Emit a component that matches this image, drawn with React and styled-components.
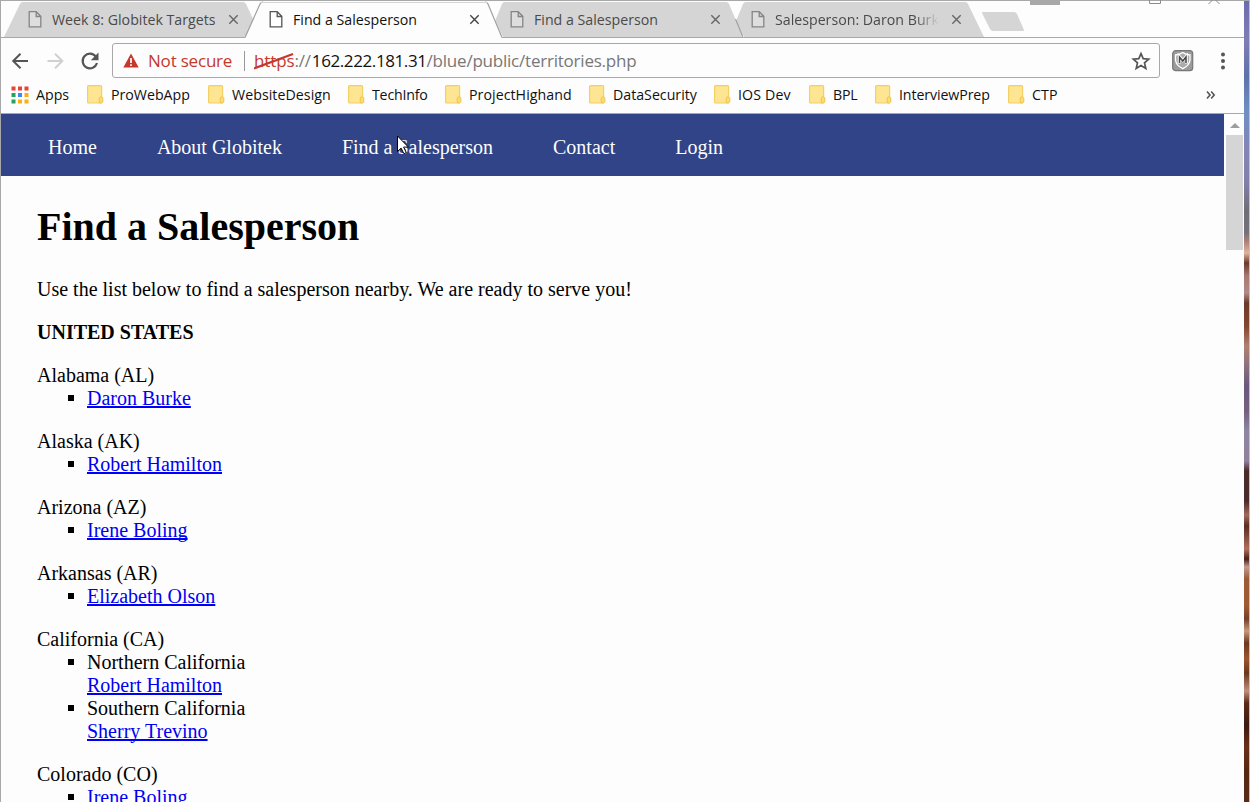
import React from 'react';
import styled, { createGlobalStyle } from 'styled-components';

const GlobalStyle = createGlobalStyle`
  * { box-sizing: border-box; }
  body { margin: 0; background: #fdfdfd; overflow: hidden; }
`;

const Desktop = styled.div`
  display: flex;
  width: 1250px;
  height: 802px;
  overflow: hidden;
`;
const Window = styled.div`
  display: flex;
  flex-direction: column;
  position: relative;
  width: 1244px;
  height: 802px;
  border-left: 1px solid #a8a8a8;
  border-top: 1px solid #a8a8a8;
  background: #fdfdfd;
  font-family: 'Open Sans', 'Noto Sans', sans-serif;
`;
const Wallpaper = styled.div`
  width: 6px;
  height: 802px;
  border-right: 1px solid #c4bfc4;
  border-top: 1px solid #a8a8a8;
  background: linear-gradient(
    #6b6cae 0, #7f7db4 40px, #5d72a8 75px, #6f8fc4 110px, #8584b4 150px,
    #8280aa 180px, #6f6e76 210px, #77707a 232px, #a98078 240px, #e0b49c 252px,
    #6a3a2c 262px, #a87a72 275px, #b08a88 292px, #6b3a2a 302px, #84452e 325px,
    #b08070 345px, #94757a 360px, #6a5a80 385px, #75607c 410px, #8c86a4 430px,
    #92809c 460px, #4a2a28 470px, #4c2a2c 500px, #a06a5c 514px, #5a2c22 525px,
    #b0705a 548px, #4a2018 558px, #c49a90 566px, #9a5c38 578px, #a05a30 605px,
    #74402a 618px, #c89a7c 630px, #6b3820 642px, #9c5630 658px, #6a371c 672px,
    #c09080 690px, #5a2a16 702px, #3c1a12 725px, #6a3018 745px, #54280f 770px, #5a2c18 802px
  );
`;
const CaptionButtons = styled.svg`
  position: absolute;
  left: 1029px;
  top: -1px;
`;

const TabStrip = styled.div`
  display: flex;
  height: 37px;
  padding-left: 3px;
  border-bottom: 1px solid #a8a8a8;
`;
const TabBox = styled.div`
  display: flex;
  align-items: center;
  position: relative;
  width: 257px;
  height: 37px;
  margin-right: -16px;
  padding: 0 15px 0 24px;
  z-index: ${p => p.$layer};
`;
const TabShape = styled.svg`
  position: absolute;
  left: 0;
  top: 0;
  z-index: -1;
`;
const TabTitle = styled.span`
  width: 163px;
  margin-left: 9px;
  overflow: hidden;
  white-space: nowrap;
  font-size: 14.2px;
  line-height: 22px;
  color: ${p => (p.$active ? '#111' : '#4a4a4a')};
  ${p => p.$fade && 'mask-image: linear-gradient(to right, #000 140px, transparent 164px);'}
`;
const TabClose = styled.svg`
  margin-left: 13px;
`;
const NewTab = styled.svg`
  margin: 10px 0 0 13px;
`;

const Toolbar = styled.div`
  display: flex;
  align-items: center;
  height: 46px;
  padding: 0 0 1px 9px;
`;
const NavIcons = styled.div`
  display: flex;
  gap: 15px;
  width: 102px;
`;
const AddressBar = styled.div`
  display: flex;
  align-items: center;
  width: 1048px;
  height: 35px;
  padding-left: 10px;
  border: 1px solid #a8a8a8;
  border-radius: 3px;
  font-size: 17px;
`;
const Warning = styled.span`
  width: 84px;
  margin-left: 9px;
  color: #c5382b;
  white-space: nowrap;
  letter-spacing: -0.2px;
`;
const Divider = styled.span`
  width: 1px;
  height: 20px;
  margin: 0 9px 0 12px;
  background: #999;
`;
const Scheme = styled.span`
  position: relative;
  color: #c5382b;
  letter-spacing: -0.1px;
`;
const Strike = styled.svg`
  position: absolute;
  left: 0;
  top: 3px;
`;
const Url = styled.span`
  flex: 1;
  white-space: nowrap;
  color: #777;
  letter-spacing: -0.22px;
`;
const Host = styled.span`
  margin-left: 1px;
  color: #111;
  letter-spacing: -0.4px;
`;
const ToolbarEnd = styled.div`
  display: flex;
  align-items: center;
  gap: 25px;
  margin-left: 12px;
`;

const BookmarksBar = styled.div`
  display: flex;
  align-items: center;
  height: 30px;
  padding: 0 0 8px 10px;
  border-bottom: 1px solid #a8a8a8;
`;
const BookmarkItem = styled.div`
  display: flex;
  align-items: center;
  gap: 7px;
  width: ${p => p.$width}px;
  white-space: nowrap;
  font-size: 14.2px;
  line-height: 20px;
  letter-spacing: ${p => p.$spacing || 0}px;
  color: #111;
`;

const Viewport = styled.div`
  display: flex;
  flex: 1;
  overflow: hidden;
`;
const Page = styled.main`
  width: 1223px;
  font-family: 'Liberation Serif', 'Times New Roman', serif;
  font-size: 20px;
  line-height: 23px;
  color: #000;
`;
const SiteNav = styled.nav`
  position: relative;
  display: flex;
  align-items: center;
  gap: 60px;
  height: 62px;
  padding-left: 47px;
  background: #304487;
  color: #fdfdfd;
`;
const NavLink = styled.a`
  white-space: nowrap;
  line-height: 23px;
  margin-top: 4px;
`;
const Pointer = styled.svg`
  position: absolute;
  left: 395px;
  top: 21px;
`;
const Content = styled.section`
  padding: 28px 36px 0;
`;
const Heading = styled.h1`
  margin: 0 0 28px;
  font-size: 40px;
  line-height: 46px;
  font-weight: bold;
`;
const Paragraph = styled.p`
  margin: 0 0 20px;
`;
const Country = styled.p`
  margin: 0 0 20px;
  font-weight: bold;
`;
const State = styled.div`
  margin-bottom: 20px;
`;
const TerritoryList = styled.ul`
  margin: 0;
  padding-left: 50px;
  list-style: none;
`;
const Territory = styled.li`
  position: relative;
  &::before {
    content: '';
    position: absolute;
    left: -19px;
    top: 8px;
    width: 6px;
    height: 6px;
    background: #000;
  }
`;
const PersonLink = styled.a`
  display: table;
  color: #0000f4;
  text-decoration: underline;
  text-decoration-thickness: 2px;
  text-underline-offset: 1px;
  text-decoration-skip-ink: none;
`;
const Scrollbar = styled.div`
  display: flex;
  flex-direction: column;
  align-items: center;
  width: 20px;
  padding: 9px 0 0 1px;
`;
const Thumb = styled.div`
  width: 17px;
  height: 115px;
  margin-top: 7px;
  background: #d5d5d5;
`;

const DocIcon = ({ active }) => (
  <svg width="15" height="19" viewBox="0 0 15 19" fill={active ? '#fff' : '#dedede'} stroke={active ? '#555' : '#858585'} strokeWidth="1.3">
    <path d="M1.2 1.7h7l4.6 4.6v10.6H1.2zM8.2 1.7v4.8h4.6" />
  </svg>
);

const Tab = ({ title, active, fade, layer, shape, edge }) => (
  <TabBox $layer={layer}>
    <TabShape width="257" height="37" viewBox="0 0 257 37" fill="none">
      <path d={shape} fill={active ? '#fdfdfd' : '#d5d5d5'} />
      {edge && <path d={edge} stroke="#a0a0a0" strokeWidth="1.2" />}
      {active && <path d="M15 1.5H242" stroke="#d5d5d5" />}
    </TabShape>
    <DocIcon active={active} />
    <TabTitle $active={active} $fade={fade}>{title}</TabTitle>
    <TabClose width="11" height="11" viewBox="0 0 11 11" stroke={active ? '#444' : '#666'} strokeWidth="1.4">
      <path d="M1.3 1.3l8.4 8.4M9.7 1.3L1.3 9.7" />
    </TabClose>
  </TabBox>
);

const FolderIcon = () => (
  <svg width="17" height="19" viewBox="0 0 17 19">
    <rect x=".6" y=".6" width="14" height="17.4" rx="1" fill="#fde591" stroke="#f3cf68" strokeWidth="1.2" />
    <path d="M12.3 17.8v-5l1.7-1.3 1.8 1.3v4.2l-1.5 1z" fill="#fbdd78" stroke="#f1c447" />
  </svg>
);

const AppsIcon = () => {
  const colors = ['#ea4335', '#ea4335', '#ea4335', '#26a35a', '#4285f4', '#fbaf10', '#26a35a', '#fbaf10', '#fbaf10'];
  return (
    <svg width="18" height="18" viewBox="0 0 18 18">
      {colors.map((c, i) => (
        <rect key={i} x={(i % 3) * 6.5 + 0.5} y={Math.floor(i / 3) * 6.5 + 0.5} width="4" height="4" fill={c} />
      ))}
    </svg>
  );
};

const tabs = [
  { title: 'Week 8: Globitek Targets', layer: 1, shape: 'M0 36L16 3Q17 1 19 1H239Q241 1 242 3L250 20L242 36Z' },
  { title: 'Find a Salesperson', layer: 4, active: true, shape: 'M0 37L15 3Q16 1 18 1H240Q242 1 243 3L258 37Z', edge: 'M0 36.5L15 3Q16 1 18 1M240 1Q242 1 243 3L257 36.5' },
  { title: 'Find a Salesperson', layer: 3, shape: 'M17 36L9 20L16 3Q17 1 19 1H240Q242 1 243 3L257 36Z', edge: 'M249.500 18L257 36' },
  { title: 'Salesperson: Daron Burke', layer: 2, fade: true, shape: 'M17 36L9 20L16 3Q17 1 19 1H238Q240 1 241 3L257 36Z' },
];

const bookmarks = [
  ['ProWebApp', 121, 0], ['WebsiteDesign', 140, 0.05], ['TechInfo', 97, -0.2], ['ProjectHighand', 144, 0.05],
  ['DataSecurity', 125, 0], ['IOS Dev', 95, 0.15], ['BPL', 66, -0.2], ['InterviewPrep', 133, -0.1], ['CTP', 197, 0.1],
];

const links = ['Home', 'About Globitek', 'Find a Salesperson', 'Contact', 'Login'];

const states = [
  { name: 'Alabama (AL)', territories: [{ person: 'Daron Burke' }] },
  { name: 'Alaska (AK)', territories: [{ person: 'Robert Hamilton' }] },
  { name: 'Arizona (AZ)', territories: [{ person: 'Irene Boling' }] },
  { name: 'Arkansas (AR)', territories: [{ person: 'Elizabeth Olson' }] },
  {
    name: 'California (CA)',
    territories: [
      { area: 'Northern California', person: 'Robert Hamilton' },
      { area: 'Southern California', person: 'Sherry Trevino' },
    ],
  },
  { name: 'Colorado (CO)', territories: [{ person: 'Irene Boling' }] },
];

export default function App() {
  return (
    <Desktop>
      <GlobalStyle />
      <Window>
        <CaptionButtons width="200" height="6" viewBox="0 0 200 6" fill="none">
          <path d="M0 0h30v5H0z" fill="#a8a8a8" />
          <path d="M119.5 0v3.5h11V0" stroke="#8c8c8c" />
          <path d="M178.5 4l4-4M185.5 0l4 4" stroke="#8c8c8c" />
        </CaptionButtons>
        <TabStrip>
          {tabs.map((t, i) => <Tab key={i} {...t} />)}
          <NewTab width="43" height="20" viewBox="0 0 43 20">
            <path d="M1.5 1H33q2 0 3 2l7 16q0 1-1 1H12q-2 0-3-2L1 2q0-1 .5-1z" fill="#d5d5d5" />
          </NewTab>
        </TabStrip>
        <Toolbar>
          <NavIcons>
            <svg width="20" height="20" viewBox="0 0 20 20" fill="none" stroke="#555" strokeWidth="2">
              <path d="M18 10H3.5M10.5 2.7L3.2 10l7.3 7.3" />
            </svg>
            <svg width="20" height="20" viewBox="0 0 20 20" fill="none" stroke="#d0d0d0" strokeWidth="2">
              <path d="M2.500 10H17M10 2.700l7.300 7.300-7.300 7.300" />
            </svg>
            <svg width="20" height="20" viewBox="0 0 20 20" fill="none" stroke="#555" strokeWidth="2.2">
              <path d="M15.8 5.6A7.3 7.3 0 1 0 17 12" />
              <path d="M18.5 1.5v7.7h-7.7z" fill="#555" stroke="none" />
            </svg>
          </NavIcons>
          <AddressBar>
            <svg width="16" height="15" viewBox="0 0 16 15">
              <path d="M8 .5L15.7 14.5H.3z" fill="#c5382b" />
              <path d="M8 5v5M8 11.3v1.7" stroke="#fdfdfd" strokeWidth="1.7" />
            </svg>
            <Warning>Not secure</Warning>
            <Divider />
            <Url>
              <Scheme>
                https
                <Strike width="42" height="20" viewBox="0 0 42 20">
                  <path d="M0 16.5L39 2" stroke="#c5382b" strokeWidth="2.2" />
                </Strike>
              </Scheme>
              ://<Host>162.222.181.31</Host>/blue/public/territories.php
            </Url>
            <svg width="28" height="20" viewBox="0 0 28 20" fill="none" stroke="#555" strokeWidth="1.7">
              <path d="M10 2.6l2.2 5.100 5.500.5-4.200 3.700 1.300 5.500-4.800-2.900-4.800 2.900 1.300-5.500-4.200-3.700 5.500-.5z" />
            </svg>
          </AddressBar>
          <ToolbarEnd>
            <svg width="22" height="22" viewBox="0 0 22 22" fill="none">
              <rect x=".7" y=".7" width="20" height="20" rx="3" fill="#9b9b9b" stroke="#777" strokeWidth="1.2" />
              <path d="M3.5 5q4.5-.5 7.300-2.500Q13.500 4.500 18 5v5q-.5 5.500-7.200 8.700Q4 15.500 3.500 10z" fill="#aaa" stroke="#fff" strokeWidth="1.300" />
              <path d="M7.3 13.5V6.500l3.500 4 3.500-4v7" fill="none" stroke="#fff" strokeWidth="3" />
              <path d="M7.5 13V7l3.300 4L14 7v6" stroke="#444" strokeWidth="1.500" />
            </svg>
            <svg width="8" height="18" viewBox="0 0 8 18" fill="#555">
              <circle cx="4" cy="2.5" r="2" /><circle cx="4" cy="9" r="2" /><circle cx="4" cy="15.5" r="2" />
            </svg>
          </ToolbarEnd>
        </Toolbar>
        <BookmarksBar>
          <BookmarkItem $width={76} $spacing={0}><AppsIcon />Apps</BookmarkItem>
          {bookmarks.map(([name, width, spacing]) => (
            <BookmarkItem key={name} $width={width} $spacing={spacing}><FolderIcon />{name}</BookmarkItem>
          ))}
          <svg width="12" height="10" viewBox="0 0 12 10" fill="none" stroke="#555" strokeWidth="1.6">
            <path d="M2 1.5L5 5 2 8.5M6.200 1.500L9.200 5l-3 3.500" />
          </svg>
        </BookmarksBar>
        <Viewport>
          <Page>
            <SiteNav>
              {links.map(l => <NavLink key={l}>{l}</NavLink>)}
              <Pointer width="14" height="21" viewBox="0 0 14 21">
                <path d="M1.5 1v15.500l3.600-3.400 2.800 5.600 2.400-1.100-2.700-5.500h4.800z" fill="#fff" stroke="#000" />
              </Pointer>
            </SiteNav>
            <Content>
              <Heading>Find a Salesperson</Heading>
              <Paragraph>Use the list below to find a salesperson nearby. We are ready to serve you!</Paragraph>
              <Country>UNITED STATES</Country>
              {states.map(s => (
                <State key={s.name}>
                  {s.name}
                  <TerritoryList>
                    {s.territories.map(t => (
                      <Territory key={t.person}>
                        {t.area}
                        <PersonLink>{t.person}</PersonLink>
                      </Territory>
                    ))}
                  </TerritoryList>
                </State>
              ))}
            </Content>
          </Page>
          <Scrollbar>
            <svg width="10" height="5" viewBox="0 0 10 5"><path d="M5 0l5 5H0z" fill="#9d9d9d" /></svg>
            <Thumb />
          </Scrollbar>
        </Viewport>
      </Window>
      <Wallpaper />
    </Desktop>
  );
}
